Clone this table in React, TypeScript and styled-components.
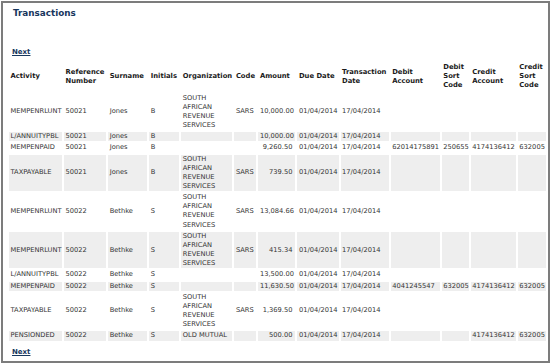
import React from "react";
import styled, { createGlobalStyle } from "styled-components";

const GlobalStyle = createGlobalStyle`
  html, body {
    margin: 0;
    padding: 0;
    background: #ffffff;
  }
  body {
    font-family: "DejaVu Sans", Verdana, sans-serif;
  }
`;

type Txn = {
  activity: string;
  ref: string;
  surname: string;
  initials: string;
  org: string;
  code: string;
  amount: string;
  due: string;
  trans: string;
  debitAcc: string;
  debitSort: string;
  creditAcc: string;
  creditSort: string;
};

const SARS = "SOUTH AFRICAN REVENUE SERVICES";

const rows: Txn[] = [
  { activity: "MEMPENRLUNT", ref: "50021", surname: "Jones", initials: "B", org: SARS, code: "SARS", amount: "10,000.00", due: "01/04/2014", trans: "17/04/2014", debitAcc: "", debitSort: "", creditAcc: "", creditSort: "" },
  { activity: "L/ANNUITYPBL", ref: "50021", surname: "Jones", initials: "B", org: "", code: "", amount: "10,000.00", due: "01/04/2014", trans: "17/04/2014", debitAcc: "", debitSort: "", creditAcc: "", creditSort: "" },
  { activity: "MEMPENPAID", ref: "50021", surname: "Jones", initials: "B", org: "", code: "", amount: "9,260.50", due: "01/04/2014", trans: "17/04/2014", debitAcc: "62014175891", debitSort: "250655", creditAcc: "4174136412", creditSort: "632005" },
  { activity: "TAXPAYABLE", ref: "50021", surname: "Jones", initials: "B", org: SARS, code: "SARS", amount: "739.50", due: "01/04/2014", trans: "17/04/2014", debitAcc: "", debitSort: "", creditAcc: "", creditSort: "" },
  { activity: "MEMPENRLUNT", ref: "50022", surname: "Bethke", initials: "S", org: SARS, code: "SARS", amount: "13,084.66", due: "01/04/2014", trans: "17/04/2014", debitAcc: "", debitSort: "", creditAcc: "", creditSort: "" },
  { activity: "MEMPENRLUNT", ref: "50022", surname: "Bethke", initials: "S", org: SARS, code: "SARS", amount: "415.34", due: "01/04/2014", trans: "17/04/2014", debitAcc: "", debitSort: "", creditAcc: "", creditSort: "" },
  { activity: "L/ANNUITYPBL", ref: "50022", surname: "Bethke", initials: "S", org: "", code: "", amount: "13,500.00", due: "01/04/2014", trans: "17/04/2014", debitAcc: "", debitSort: "", creditAcc: "", creditSort: "" },
  { activity: "MEMPENPAID", ref: "50022", surname: "Bethke", initials: "S", org: "", code: "", amount: "11,630.50", due: "01/04/2014", trans: "17/04/2014", debitAcc: "4041245547", debitSort: "632005", creditAcc: "4174136412", creditSort: "632005" },
  { activity: "TAXPAYABLE", ref: "50022", surname: "Bethke", initials: "S", org: SARS, code: "SARS", amount: "1,369.50", due: "01/04/2014", trans: "17/04/2014", debitAcc: "", debitSort: "", creditAcc: "", creditSort: "" },
  { activity: "PENSIONDED", ref: "50022", surname: "Bethke", initials: "S", org: "OLD MUTUAL", code: "", amount: "500.00", due: "01/04/2014", trans: "17/04/2014", debitAcc: "", debitSort: "", creditAcc: "4174136412", creditSort: "632005" },
];

const columns = [
  { label: "Activity", w: 53 },
  { label: "Reference Number", w: 42 },
  { label: "Surname", w: 39 },
  { label: "Initials", w: 30 },
  { label: "Organization", w: 51 },
  { label: "Code", w: 22 },
  { label: "Amount", w: 37 },
  { label: "Due Date", w: 41 },
  { label: "Transaction Date", w: 48 },
  { label: "Debit Account", w: 49 },
  { label: "Debit Sort Code", w: 27 },
  { label: "Credit Account", w: 45 },
  { label: "Credit Sort Code", w: 28 },
];

const App = () => {
  return (
    <>
      <GlobalStyle />
      <Frame>
        <Title>Transactions</Title>
        <NextLink href="#">Next</NextLink>
        <Table>
          <colgroup>
            {columns.map((c) => (
              <Col key={c.label} $w={c.w} />
            ))}
          </colgroup>
          <thead>
            <tr>
              {columns.map((c) => (
                <Th key={c.label}>{c.label}</Th>
              ))}
            </tr>
          </thead>
          <tbody>
            {rows.map((r, i) => (
              <Row key={i} $shaded={i % 2 === 1}>
                <Td>{r.activity}</Td>
                <Td>{r.ref}</Td>
                <Td>{r.surname}</Td>
                <Td>{r.initials}</Td>
                <Td>{r.org}</Td>
                <Td>{r.code}</Td>
                <Td $right>{r.amount}</Td>
                <Td>{r.due}</Td>
                <Td>{r.trans}</Td>
                <Td>{r.debitAcc}</Td>
                <Td>{r.debitSort}</Td>
                <Td>{r.creditAcc}</Td>
                <Td>{r.creditSort}</Td>
              </Row>
            ))}
          </tbody>
        </Table>
        <NextLink href="#" $bottom>Next</NextLink>
      </Frame>
    </>
  );
};

export default App;

const Frame = styled.div`
  margin: 1px 0 0 1px;
  border: 2px solid #7c7c7c;
  padding: 4px 0 4px 4px;
  box-sizing: content-box;
  width: 541px;
  background: #ffffff;
`;

const Title = styled.div`
  font-size: 8.8px;
  font-weight: bold;
  line-height: 12px;
  color: #17365d;
  padding-left: 6px;
`;

const NextLink = styled.a<{ $bottom?: boolean }>`
  display: block;
  width: max-content;
  margin: ${(p) => (p.$bottom ? "4.6px 0 0 5px" : "28px 0 0 5px")};
  font-size: 7px;
  font-weight: bold;
  line-height: 10px;
  color: #17365d;
  text-decoration: underline;
`;

const Table = styled.table`
  table-layout: fixed;
  width: 541px;
  border-collapse: separate;
  border-spacing: 2px;
  margin-top: 3px;
`;

const Col = styled.col<{ $w: number }>`
  width: ${(p) => p.$w}px;
`;

const Th = styled.th`
  font-size: 6.8px;
  font-weight: bold;
  line-height: 9.2px;
  color: #1a1a1a;
  text-align: left;
  vertical-align: middle;
  padding: 1px 1.5px;
  white-space: normal;
`;

const Row = styled.tr<{ $shaded: boolean }>`
  td {
    background: ${(p) => (p.$shaded ? "#eeeeee" : "transparent")};
  }
`;

const Td = styled.td<{ $right?: boolean }>`
  font-size: 6.7px;
  line-height: 9.15px;
  color: #333333;
  text-align: ${(p) => (p.$right ? "right" : "left")};
  vertical-align: middle;
  padding: 0 ${(p) => (p.$right ? "3px" : "1.5px")} 0 1.5px;
  white-space: normal;
`;
